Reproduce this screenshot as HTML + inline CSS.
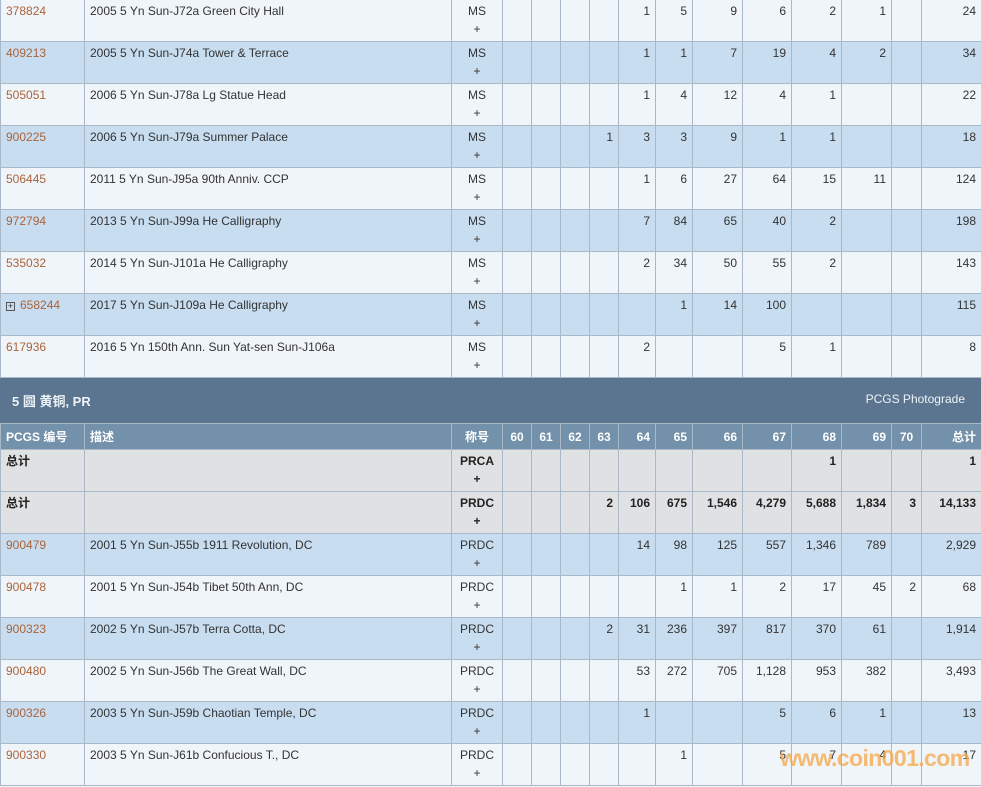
<!DOCTYPE html>
<html><head><meta charset="utf-8"><style>
body{margin:0;width:981px;height:787px;overflow:hidden;background:#f0f5fa;font-family:"Liberation Sans","Noto Sans CJK SC",sans-serif;font-size:12px;color:#333;position:relative}
table{border-collapse:collapse;table-layout:fixed;width:981px;position:absolute;left:0;top:-1px}
td{border:1px solid #a9b9c9;height:42px;padding:3px 5px 0 5px;vertical-align:top;text-align:right;line-height:16px;box-sizing:border-box;white-space:nowrap;overflow:hidden}
td.id{text-align:left;color:#a9633a}
td.d{text-align:left}
td.g{text-align:center;line-height:18px;padding-top:2px}
tr.l td{background:#f0f5fa}
tr.b td{background:#c8ddf0}
tr.t td{background:#e0e1e3;font-weight:bold;color:#222}
tr.t td.id{color:#222}
tr.sec td{background:#5b7590;height:46px;color:#eef3f8;vertical-align:middle;padding:0 6px;border-color:#5b7590 #5b7590 #a9b9c9}
tr.hd td{background:#7391ab;height:26px;color:#fff;font-weight:bold;vertical-align:middle;padding:0 5px}
.wm{position:absolute;left:780px;top:745px;font:bold 23px "Liberation Sans",sans-serif;color:rgba(245,165,70,0.75);letter-spacing:-0.6px}
.pl{display:inline-block;width:9px;height:9px;border:1px solid #555;box-sizing:border-box;font-size:9px;line-height:7px;text-align:center;margin-right:5px;color:#333}
</style></head><body>
<table>
<colgroup><col style="width:84px"><col style="width:367px"><col style="width:51px"><col style="width:29px"><col style="width:29px"><col style="width:29px"><col style="width:29px"><col style="width:37px"><col style="width:37px"><col style="width:50px"><col style="width:49px"><col style="width:50px"><col style="width:50px"><col style="width:30px"><col style="width:60px"></colgroup>
<tr class="l"><td class="id">378824</td><td class="d">2005 5 Yn Sun-J72a Green City Hall</td><td class="g">MS<br>+</td><td></td><td></td><td></td><td></td><td>1</td><td>5</td><td>9</td><td>6</td><td>2</td><td>1</td><td></td><td>24</td></tr>
<tr class="b"><td class="id">409213</td><td class="d">2005 5 Yn Sun-J74a Tower &amp; Terrace</td><td class="g">MS<br>+</td><td></td><td></td><td></td><td></td><td>1</td><td>1</td><td>7</td><td>19</td><td>4</td><td>2</td><td></td><td>34</td></tr>
<tr class="l"><td class="id">505051</td><td class="d">2006 5 Yn Sun-J78a Lg Statue Head</td><td class="g">MS<br>+</td><td></td><td></td><td></td><td></td><td>1</td><td>4</td><td>12</td><td>4</td><td>1</td><td></td><td></td><td>22</td></tr>
<tr class="b"><td class="id">900225</td><td class="d">2006 5 Yn Sun-J79a Summer Palace</td><td class="g">MS<br>+</td><td></td><td></td><td></td><td>1</td><td>3</td><td>3</td><td>9</td><td>1</td><td>1</td><td></td><td></td><td>18</td></tr>
<tr class="l"><td class="id">506445</td><td class="d">2011 5 Yn Sun-J95a 90th Anniv. CCP</td><td class="g">MS<br>+</td><td></td><td></td><td></td><td></td><td>1</td><td>6</td><td>27</td><td>64</td><td>15</td><td>11</td><td></td><td>124</td></tr>
<tr class="b"><td class="id">972794</td><td class="d">2013 5 Yn Sun-J99a He Calligraphy</td><td class="g">MS<br>+</td><td></td><td></td><td></td><td></td><td>7</td><td>84</td><td>65</td><td>40</td><td>2</td><td></td><td></td><td>198</td></tr>
<tr class="l"><td class="id">535032</td><td class="d">2014 5 Yn Sun-J101a He Calligraphy</td><td class="g">MS<br>+</td><td></td><td></td><td></td><td></td><td>2</td><td>34</td><td>50</td><td>55</td><td>2</td><td></td><td></td><td>143</td></tr>
<tr class="b"><td class="id"><span class="pl">+</span>658244</td><td class="d">2017 5 Yn Sun-J109a He Calligraphy</td><td class="g">MS<br>+</td><td></td><td></td><td></td><td></td><td></td><td>1</td><td>14</td><td>100</td><td></td><td></td><td></td><td>115</td></tr>
<tr class="l"><td class="id">617936</td><td class="d">2016 5 Yn 150th Ann. Sun Yat-sen Sun-J106a</td><td class="g">MS<br>+</td><td></td><td></td><td></td><td></td><td>2</td><td></td><td></td><td>5</td><td>1</td><td></td><td></td><td>8</td></tr>
<tr class="sec"><td colspan="12" style="text-align:left;font-weight:bold;font-size:13px;padding-left:11px;padding-top:2px">5 圆 黄铜, PR</td><td colspan="3" style="text-align:right;padding-right:16px;padding-bottom:4px">PCGS Photograde</td></tr>
<tr class="hd"><td style="text-align:left">PCGS 编号</td><td style="text-align:left">描述</td><td style="text-align:center">称号</td><td style="text-align:center">60</td><td style="text-align:center">61</td><td style="text-align:center">62</td><td style="text-align:center">63</td><td>64</td><td>65</td><td>66</td><td>67</td><td>68</td><td>69</td><td style="text-align:center">70</td><td>总计</td></tr>
<tr class="t"><td class="id">总计</td><td></td><td class="g">PRCA<br>+</td><td></td><td></td><td></td><td></td><td></td><td></td><td></td><td></td><td>1</td><td></td><td></td><td>1</td></tr>
<tr class="t"><td class="id">总计</td><td></td><td class="g">PRDC<br>+</td><td></td><td></td><td></td><td>2</td><td>106</td><td>675</td><td>1,546</td><td>4,279</td><td>5,688</td><td>1,834</td><td>3</td><td>14,133</td></tr>
<tr class="b"><td class="id">900479</td><td class="d">2001 5 Yn Sun-J55b 1911 Revolution, DC</td><td class="g">PRDC<br>+</td><td></td><td></td><td></td><td></td><td>14</td><td>98</td><td>125</td><td>557</td><td>1,346</td><td>789</td><td></td><td>2,929</td></tr>
<tr class="l"><td class="id">900478</td><td class="d">2001 5 Yn Sun-J54b Tibet 50th Ann, DC</td><td class="g">PRDC<br>+</td><td></td><td></td><td></td><td></td><td></td><td>1</td><td>1</td><td>2</td><td>17</td><td>45</td><td>2</td><td>68</td></tr>
<tr class="b"><td class="id">900323</td><td class="d">2002 5 Yn Sun-J57b Terra Cotta, DC</td><td class="g">PRDC<br>+</td><td></td><td></td><td></td><td>2</td><td>31</td><td>236</td><td>397</td><td>817</td><td>370</td><td>61</td><td></td><td>1,914</td></tr>
<tr class="l"><td class="id">900480</td><td class="d">2002 5 Yn Sun-J56b The Great Wall, DC</td><td class="g">PRDC<br>+</td><td></td><td></td><td></td><td></td><td>53</td><td>272</td><td>705</td><td>1,128</td><td>953</td><td>382</td><td></td><td>3,493</td></tr>
<tr class="b"><td class="id">900326</td><td class="d">2003 5 Yn Sun-J59b Chaotian Temple, DC</td><td class="g">PRDC<br>+</td><td></td><td></td><td></td><td></td><td>1</td><td></td><td></td><td>5</td><td>6</td><td>1</td><td></td><td>13</td></tr>
<tr class="l"><td class="id">900330</td><td class="d">2003 5 Yn Sun-J61b Confucious T., DC</td><td class="g">PRDC<br>+</td><td></td><td></td><td></td><td></td><td></td><td>1</td><td></td><td>5</td><td>7</td><td>4</td><td></td><td>17</td></tr>
</table>
<div class="wm">www.coin001.com</div>
</body></html>
